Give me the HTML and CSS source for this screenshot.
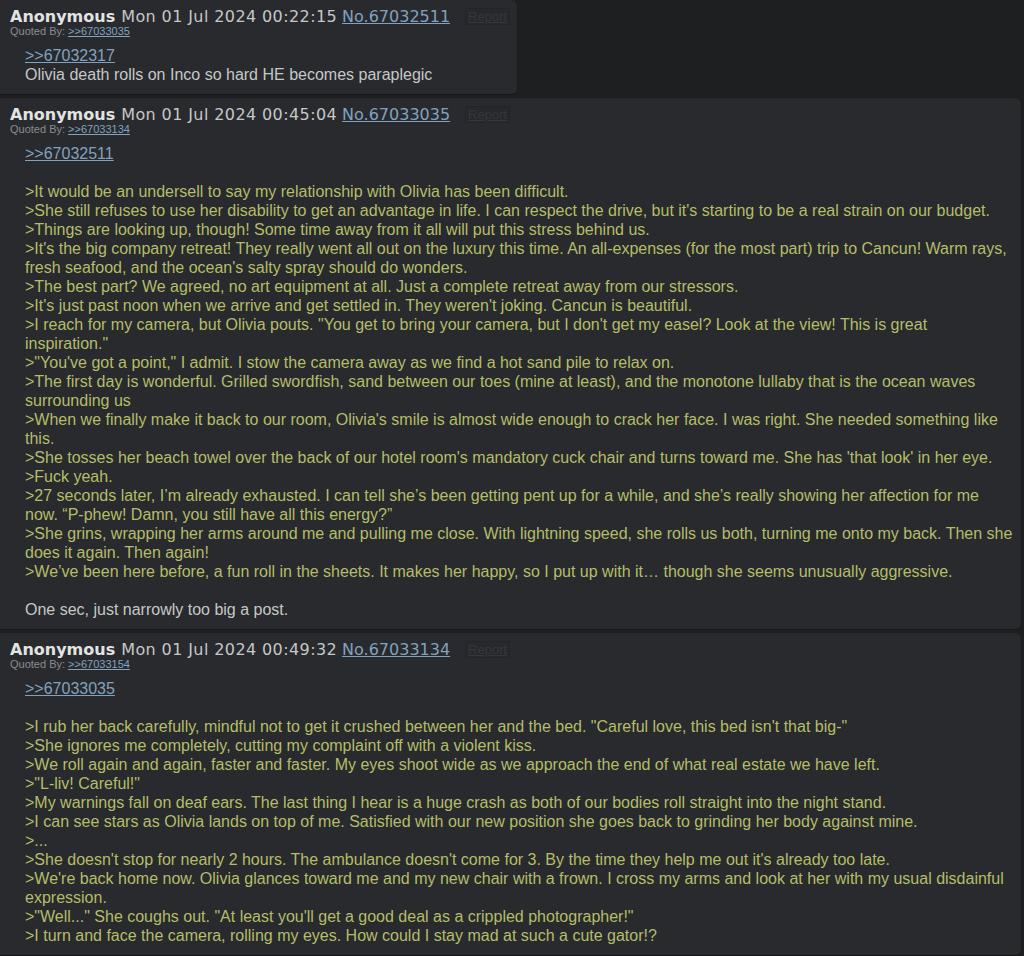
FILE: index.html
```html
<!DOCTYPE html>
<html>
<head>
<meta charset="utf-8">
<link rel="stylesheet" href="styles.css">
</head>
<body>
<div class="thread">
  <div class="post">
    <div class="post-info">
      <span class="name">Anonymous</span>
      <span class="date">Mon 01 Jul 2024 00:22:15</span>
      <a class="post-no" href="#">No.67032511</a>
      <span class="report">Report</span>
    </div>
    <div class="quoted-by">Quoted By: <a href="#">&gt;&gt;67033035</a></div>
    <blockquote class="message"><a class="quote-link" href="#">&gt;&gt;67032317</a><br>Olivia death rolls on Inco so hard HE becomes paraplegic</blockquote>
  </div>

  <div class="post">
    <div class="post-info">
      <span class="name">Anonymous</span>
      <span class="date">Mon 01 Jul 2024 00:45:04</span>
      <a class="post-no" href="#">No.67033035</a>
      <span class="report">Report</span>
    </div>
    <div class="quoted-by">Quoted By: <a href="#">&gt;&gt;67033134</a></div>
    <blockquote class="message"><a class="quote-link" href="#">&gt;&gt;67032511</a><br><br><span class="green">&gt;It would be an undersell to say my relationship with Olivia has been difficult.</span><br><span class="green">&gt;She still refuses to use her disability to get an advantage in life. I can respect the drive, but it's starting to be a real strain on our budget.</span><br><span class="green">&gt;Things are looking up, though! Some time away from it all will put this stress behind us.</span><br><span class="green">&gt;It's the big company retreat! They really went all out on the luxury this time. An all-expenses (for the most part) trip to Cancun! Warm rays, fresh seafood, and the ocean's salty spray should do wonders.</span><br><span class="green">&gt;The best part? We agreed, no art equipment at all. Just a complete retreat away from our stressors.</span><br><span class="green">&gt;It's just past noon when we arrive and get settled in. They weren't joking. Cancun is beautiful.</span><br><span class="green">&gt;I reach for my camera, but Olivia pouts. "You get to bring your camera, but I don't get my easel? Look at the view! This is great inspiration."</span><br><span class="green">&gt;"You've got a point," I admit. I stow the camera away as we find a hot sand pile to relax on.</span><br><span class="green">&gt;The first day is wonderful. Grilled swordfish, sand between our toes (mine at least), and the monotone lullaby that is the ocean waves surrounding us</span><br><span class="green">&gt;When we finally make it back to our room, Olivia's smile is almost wide enough to crack her face. I was right. She needed something like this.</span><br><span class="green">&gt;She tosses her beach towel over the back of our hotel room's mandatory cuck chair and turns toward me. She has 'that look' in her eye.</span><br><span class="green">&gt;Fuck yeah.</span><br><span class="green">&gt;27 seconds later, I’m already exhausted. I can tell she’s been getting pent up for a while, and she’s really showing her affection for me now. “P-phew! Damn, you still have all this energy?”</span><br><span class="green">&gt;She grins, wrapping her arms around me and pulling me close. With lightning speed, she rolls us both, turning me onto my back. Then she does it again. Then again!</span><br><span class="green">&gt;We’ve been here before, a fun roll in the sheets. It makes her happy, so I put up with it… though she seems unusually aggressive.</span><br><br>One sec, just narrowly too big a post.</blockquote>
  </div>

  <div class="post">
    <div class="post-info">
      <span class="name">Anonymous</span>
      <span class="date">Mon 01 Jul 2024 00:49:32</span>
      <a class="post-no" href="#">No.67033134</a>
      <span class="report">Report</span>
    </div>
    <div class="quoted-by">Quoted By: <a href="#">&gt;&gt;67033154</a></div>
    <blockquote class="message"><a class="quote-link" href="#">&gt;&gt;67033035</a><br><br><span class="green">&gt;I rub her back carefully, mindful not to get it crushed between her and the bed. "Careful love, this bed isn't that big-"</span><br><span class="green">&gt;She ignores me completely, cutting my complaint off with a violent kiss.</span><br><span class="green">&gt;We roll again and again, faster and faster. My eyes shoot wide as we approach the end of what real estate we have left.</span><br><span class="green">&gt;"L-liv! Careful!"</span><br><span class="green">&gt;My warnings fall on deaf ears. The last thing I hear is a huge crash as both of our bodies roll straight into the night stand.</span><br><span class="green">&gt;I can see stars as Olivia lands on top of me. Satisfied with our new position she goes back to grinding her body against mine.</span><br><span class="green">&gt;...</span><br><span class="green">&gt;She doesn't stop for nearly 2 hours. The ambulance doesn't come for 3. By the time they help me out it's already too late.</span><br><span class="green">&gt;We're back home now. Olivia glances toward me and my new chair with a frown. I cross my arms and look at her with my usual disdainful expression.</span><br><span class="green">&gt;"Well..." She coughs out. "At least you'll get a good deal as a crippled photographer!"</span><br><span class="green">&gt;I turn and face the camera, rolling my eyes. How could I stay mad at such a cute gator!?</span></blockquote>
  </div>
</div>
</body>
</html>
```

FILE: styles.css
```css
html, body {
  margin: 0;
  padding: 0;
  background: #1d1f21;
}

.thread {
  display: flex;
  flex-direction: column;
  align-items: flex-start;
  gap: 3px;
  padding-right: 2px;
}

.post {
  box-sizing: border-box;
  max-width: 100%;
  background: #282a2e;
  border-right: 1px solid #1a1b1d;
  border-bottom: 1px solid #161718;
  border-radius: 0 6px 6px 0;
  padding: 6px 7px 10px 10px;
  color: #c5c8c6;
  font-family: "Liberation Sans", Arial, sans-serif;
}

.post-info {
  font-family: "DejaVu Sans", Verdana, sans-serif;
  font-size: 16px;
  line-height: 19px;
  padding-top: 1px;
  white-space: nowrap;
  display: flex;
  align-items: center;
}

.name {
  font-weight: bold;
  color: #e2e4e3;
  margin-right: 6px;
}

.date {
  color: #c5c8c6;
  letter-spacing: 0.4px;
  margin-right: 5px;
}

.post-no {
  color: #81a2be;
  text-decoration: underline;
}

.report {
  margin-left: 15px;
  font-family: "Liberation Sans", Arial, sans-serif;
  font-size: 13px;
  line-height: 15px;
  padding: 0 2px;
  color: #35373b;
  border: 1px solid #222427;
  background: #26282b;
  text-decoration: underline;
}

.quoted-by {
  font-size: 11px;
  line-height: 11px;
  color: #8b8d8f;
  margin-top: 0;
}

.quoted-by a {
  color: #81a2be;
  text-decoration: underline;
}

.message {
  margin: 9px 0 0 15px;
  font-size: 16px;
  line-height: 19px;
  color: #c5c8c6;
}

.quote-link {
  color: #81a2be;
  text-decoration: underline;
}

.green {
  color: #b5bd68;
}
```
